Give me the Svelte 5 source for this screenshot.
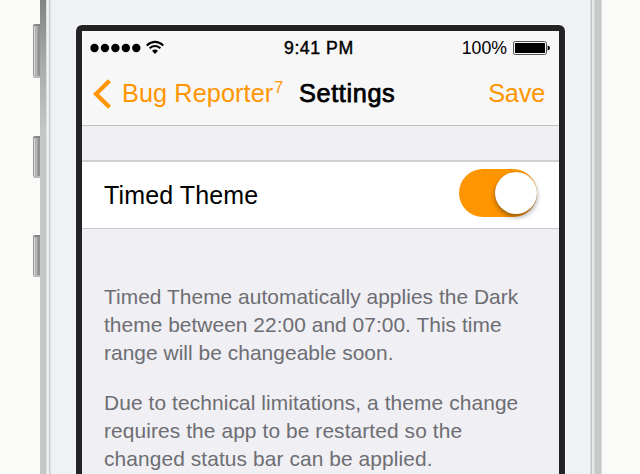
<script>
  let on = $state(true);
  const buttons = [{ gap: 24, height: 54 }, { gap: 58, height: 42 }, { gap: 57, height: 42 }];
  const notes = [
    ['Timed Theme automatically applies the Dark', 'theme between 22:00 and 07:00. This time', 'range will be changeable soon.'],
    ['Due to technical limitations, a theme change', 'requires the app to be restarted so the', 'changed status bar can be applied.']
  ];
</script>

<div class="page">
  <div class="buttons">
    {#each buttons as b}
      <i style="margin-top:{b.gap}px;height:{b.height}px"></i>
    {/each}
  </div>
  <div class="rail left"></div>
  <div class="body">
    <div class="screen">
      <header>
        <div class="status">
          <div class="signal">
            <svg width="80" height="18" viewBox="0 0 80 18">
              {#each [0, 1, 2, 3, 4] as n}
                <circle cx={12.5 + n * 10.45} cy="9" r="4.2" />
              {/each}
              <g fill="none" stroke="#000" stroke-width="2">
                <path d="M64.7 6.2Q73 -.8 81.3 6.2" transform="translate(0 .2)" />
                <path d="M67.6 9.2Q73 4.8 78.4 9.2" />
              </g>
              <path d="M70 11.7Q73 9.5 76 11.7L73 15Z" />
            </svg>
          </div>
          <span class="time">9:41 PM</span>
          <div class="power">
            <span>100%</span>
            <svg width="38" height="16" viewBox="0 0 38 16">
              <rect x=".5" y="1.5" width="33" height="13" rx="1.8" fill="#f7f7f7" stroke="#555" />
              <rect x="2" y="3" width="30" height="10" rx=".5" />
              <path d="M34.6 5.4Q37 5.8 37 8T34.6 10.6Z" />
            </svg>
          </div>
        </div>
        <nav>
          <svg width="20" height="30" viewBox="0 0 20 30">
            <path d="M17.5 1.8L4 15L17.5 28.2" fill="none" stroke="#ff9500" stroke-width="4.2" />
          </svg>
          <span class="back">Bug Reporter<sup>7</sup></span>
          <strong>Settings</strong>
          <span class="save">Save</span>
        </nav>
      </header>
      <div class="row">
        <span>Timed Theme</span>
        <button class:on onclick={() => (on = !on)} aria-label="Timed Theme"><i></i></button>
      </div>
      <div class="notes">
        {#each notes as lines}
          <p>{#each lines as line}<span>{line}</span>{/each}</p>
        {/each}
      </div>
    </div>
  </div>
  <div class="rail right"></div>
</div>

<style>
  :global(body) { background: #fafaf8; overflow: hidden; }
  .page {
    display: flex; width: 640px; height: 474px; overflow: hidden;
    background: #fafaf8; color: #000;
    font-family: "Liberation Sans", Arial, sans-serif;
  }
  .buttons { width: 40px; flex: none; display: flex; flex-direction: column; align-items: flex-end; }
  .buttons i {
    display: block; width: 7px; flex: none; box-sizing: border-box;
    border-radius: 2px 0 0 2px;
    border-top: 2px solid #858887; border-bottom: 2px solid #b9bbba;
    background: linear-gradient(90deg, #999c9b 0 1px, #d6d8d7 1px 2px, #b2b5b4 2px 4px, #8f9291 5px 7px);
  }
  .rail { width: 12px; flex: none; }
  .left {
    background:
      linear-gradient(90deg, transparent 6px, #d9dbdb 6px 7px, #f2f3f3 7px 8px, #eeefef 8px 9px, #c6c8c9 9px 10px, #e3e4e6 10px 11px, #eceef0 11px),
      linear-gradient(#818483, #a9acab 65px, #c5c8c6 135px);
  }
  .right {
    margin-left: -2px;
    background: linear-gradient(90deg, #d9dbdc 0 1px, #bfc1c2 1px 2px, #e7e9e9 2px 4px, #d5d7d6 4px 5px, #c6c9c7 5px 11px, #dcdddb 11px);
  }
  .body { width: 540px; flex: none; box-sizing: border-box; padding: 25px 0 0 24px; background: #eff1f4; }
  .screen {
    width: 489px; height: 500px; box-sizing: border-box;
    border: 6px solid #232326; border-width: 6px 6px 0; border-radius: 6px 6px 0 0;
    outline: 1px solid #fafbfc;
    background: #efeff4; overflow: hidden;
  }
  header { height: 95px; box-sizing: border-box; border-bottom: 1px solid #c0c0c4; background: #f7f7f7; }
  .status { height: 34px; display: flex; align-items: center; font-size: 17.7px; }
  .signal { width: 202px; }
  svg { display: block; overflow: visible; }
  .time { width: 150px; -webkit-text-stroke: .45px #000; letter-spacing: .55px; white-space: nowrap; }
  .power { display: flex; align-items: center; margin-left: auto; margin-right: 8px; gap: 6px; }
  nav { height: 57px; display: flex; align-items: center; padding: 0 14px 0 10px; font-size: 25.3px; white-space: nowrap; }
  .back, .save { color: #ff9500; }
  .back { margin-left: 10px; width: 177px; letter-spacing: .07px; }
  sup { font-size: 16px; line-height: 0; vertical-align: 9px; margin-left: 1px; }
  strong { font-weight: 400; -webkit-text-stroke: .75px #000; letter-spacing: .62px; }
  .save { margin-left: auto; letter-spacing: -.2px; }
  .row {
    margin-top: 34px; height: 69px; box-sizing: border-box;
    display: flex; align-items: center; justify-content: space-between;
    padding: 0 22px; background: #fff;
    border-top: 2px solid #d0cfd4; border-bottom: 1px solid #c8c7cc;
    font-size: 25px; letter-spacing: .14px;
  }
  button { width: 78px; height: 48px; padding: 0 0 0 1px; margin: 0 0 4px; border: 0; border-radius: 24px; background: #e5e5ea; display: flex; align-items: center; flex: none; }
  button.on { background: #ff9500; justify-content: flex-end; }
  button i { width: 42px; height: 42px; border-radius: 50%; background: #fff; box-shadow: 0 3px 5px rgba(0, 0, 0, .38), 0 0 1px rgba(0, 0, 0, .25); }
  .notes { padding: 54px 22px 0; color: #6d6d72; font-size: 20.9px; line-height: 28.2px; letter-spacing: .05px; }
  p { margin: 0 0 21.2px; }
  p + p { letter-spacing: .1px; }
  p span { display: block; white-space: nowrap; }
</style>
